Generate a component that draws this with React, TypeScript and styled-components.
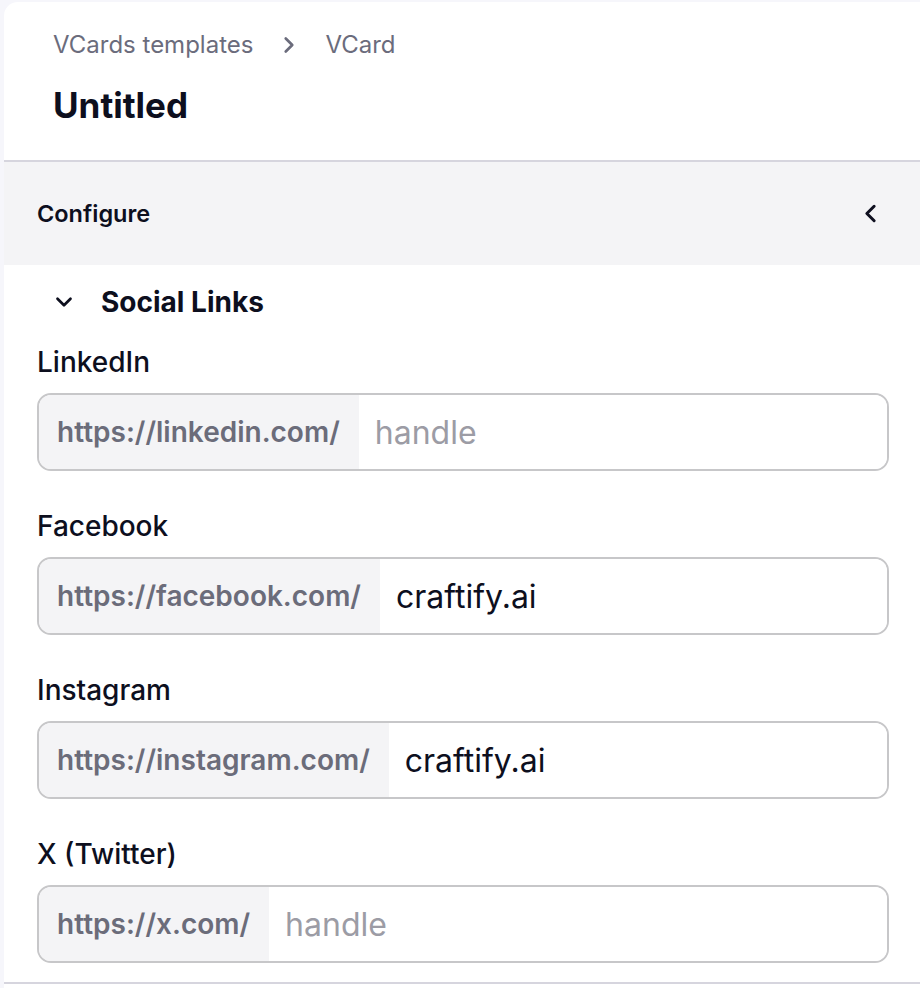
import styled, { createGlobalStyle } from "styled-components";

const GlobalStyle = createGlobalStyle`
  html, body {
    margin: 0;
    padding: 0;
    background: #f6f6fb;
  }
  body {
    font-family: Inter, "Noto Sans", "Liberation Sans", sans-serif;
    color: #0f1020;
  }
  * {
    box-sizing: border-box;
  }
`;

const Page = styled.div`
  padding: 2px 0 0 4px;
  min-height: 988px;
`;

const Panel = styled.div`
  background: #ffffff;
  border-top-left-radius: 14px;
  overflow: hidden;
  min-height: 986px;
`;

const Header = styled.header`
  padding: 27px 0 35px 49px;
  border-bottom: 2px solid #d6d5de;
`;

const Breadcrumb = styled.nav`
  display: flex;
  align-items: center;
  gap: 23px;
  height: 32px;
  font-size: 24px;
  color: #6b6c7c;
`;

const Crumb = styled.span`
  line-height: 32px;
`;

const Title = styled.h1`
  margin: 24px 0 0;
  font-size: 35px;
  line-height: 40px;
  font-weight: 700;
  color: #0d0f1e;
`;

const SectionBar = styled.div`
  display: flex;
  align-items: center;
  justify-content: space-between;
  height: 103px;
  padding: 0 35px 0 33px;
  background: #f4f4f6;
`;

const SectionTitle = styled.span`
  font-size: 23.5px;
  font-weight: 600;
  color: #0d0f1e;
`;

const Body = styled.div`
  padding: 21px 31px 19px 33px;
  border-bottom: 2px solid #d6d5de;
`;

const GroupToggle = styled.div`
  display: flex;
  align-items: center;
  height: 32px;
  padding-left: 14px;
  gap: 24px;
  font-size: 28px;
  font-weight: 700;
  color: #0d0f1e;
`;

const FieldList = styled.div`
  display: flex;
  flex-direction: column;
  gap: 39px;
  margin-top: 28px;
`;

const Field = styled.label`
  display: flex;
  flex-direction: column;
  gap: 15px;
`;

const FieldLabel = styled.span`
  font-size: 28px;
  line-height: 32px;
  font-weight: 500;
  color: #0d0f1e;
`;

const InputGroup = styled.div`
  display: flex;
  height: 78px;
  border: 2px solid #c7c7c9;
  border-radius: 14px;
  overflow: hidden;
`;

const Prefix = styled.span`
  display: flex;
  align-items: center;
  padding: 0 19px 0 18px;
  background: #f4f4f6;
  font-size: 28px;
  font-weight: 600;
  color: #6b6c7a;
  white-space: nowrap;
`;

const TextInput = styled.input`
  flex: 1;
  min-width: 0;
  border: none;
  outline: none;
  padding: 0 16px;
  font-family: inherit;
  font-size: 32px;
  color: #0d0f1e;
  background: #ffffff;

  &::placeholder {
    color: #9c9ca5;
  }
`;

const Icon = ({ d, size, stroke = 2.5 }: { d: string; size: number; stroke?: number }) => (
  <svg
    width={size}
    height={size}
    viewBox="0 0 24 24"
    fill="none"
    stroke="currentColor"
    strokeWidth={stroke}
    strokeLinecap="round"
    strokeLinejoin="round"
  >
    <path d={d} />
  </svg>
);

const links = [
  { label: "LinkedIn", prefix: "https://linkedin.com/", value: "" },
  { label: "Facebook", prefix: "https://facebook.com/", value: "craftify.ai" },
  { label: "Instagram", prefix: "https://instagram.com/", value: "craftify.ai" },
  { label: "X (Twitter)", prefix: "https://x.com/", value: "" },
];

const App = () => {
  return (
    <Page>
      <GlobalStyle />
      <Panel>
        <Header>
          <Breadcrumb>
            <Crumb>VCards templates</Crumb>
            <Icon d="m9 18 6-6-6-6" size={26} />
            <Crumb>VCard</Crumb>
          </Breadcrumb>
          <Title>Untitled</Title>
        </Header>

        <SectionBar>
          <SectionTitle>Configure</SectionTitle>
          <Icon d="m15 18-6-6 6-6" size={29} />
        </SectionBar>

        <Body>
          <GroupToggle>
            <Icon d="m6 9 6 6 6-6" size={26} />
            <span>Social Links</span>
          </GroupToggle>

          <FieldList>
            {links.map((link) => (
              <Field key={link.label}>
                <FieldLabel>{link.label}</FieldLabel>
                <InputGroup>
                  <Prefix>{link.prefix}</Prefix>
                  <TextInput placeholder="handle" defaultValue={link.value} />
                </InputGroup>
              </Field>
            ))}
          </FieldList>
        </Body>
      </Panel>
    </Page>
  );
};

export default App;
